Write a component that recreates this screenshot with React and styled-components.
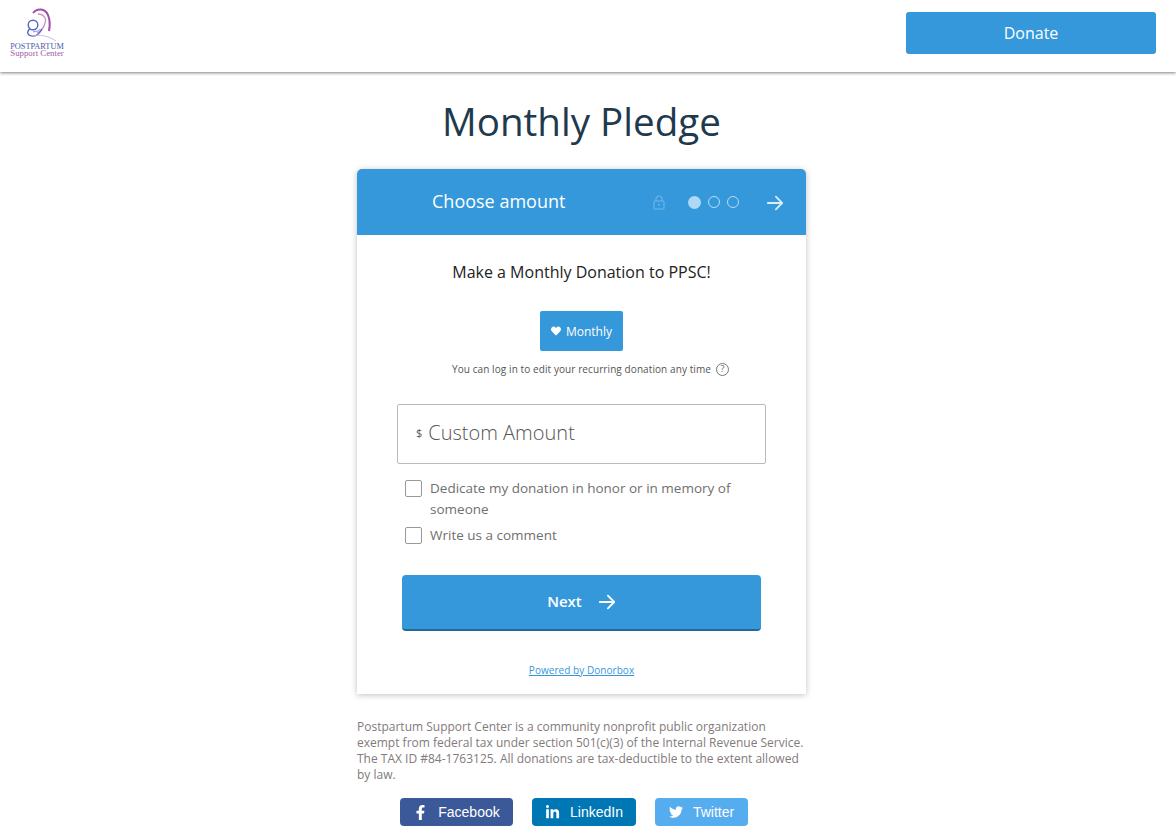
import React from 'react'
import styled, { createGlobalStyle } from 'styled-components'
import { FaFacebookF, FaLinkedinIn, FaTwitter, FaHeart } from 'react-icons/fa'

const GlobalStyle = createGlobalStyle`
    html, body {
        margin: 0;
        padding: 0;
        background: #fff;
        font-family: "Open Sans", "Liberation Sans", sans-serif;
        overflow: hidden;
    }
`

function Logo() {
    return (
        <LogoBox>
            <svg width="34" height="33" viewBox="0 0 34 33" fill="none">
                <path d="M8 5 C12 0 20 0 23 7 C25 12 25 18 24 23" stroke="#a050a8" strokeWidth="2" />
                <path d="M13 6 C18 6 22 10 20 15 C19 19 16 23 12 25" stroke="#c890c8" strokeWidth="1.3" />
                <circle cx="8" cy="17" r="4.8" stroke="#5468c0" strokeWidth="1.4" />
                <path d="M4.5 21 C1 25 3 28 8 28 C12 28 15 25 17 21" stroke="#5468c0" strokeWidth="1.4" />
                <path d="M8 24 C11 23 13 24 15 21" stroke="#8a9ad8" strokeWidth="1" />
                <path d="M6 28 C14 26 24 28 31 33" stroke="#c9b4de" strokeWidth="0.9" />
            </svg>
            <LogoMain>POSTPARTUM</LogoMain>
            <LogoSub>Support Center</LogoSub>
        </LogoBox>
    )
}

function Arrow({ size = 20 }) {
    return (
        <svg width={size} height={size} viewBox="0 0 20 20" fill="none" stroke="currentColor" strokeWidth="2" strokeLinecap="round" strokeLinejoin="round">
            <path d="M2 10 H18 M11 3 L18 10 L11 17" />
        </svg>
    )
}

function App() {
    return (
        <Page>
            <GlobalStyle />
            <TopBar>
                <Logo />
                <DonateButton>Donate</DonateButton>
            </TopBar>
            <Main>
                <Title>Monthly Pledge</Title>
                <Card>
                    <CardHeader>
                        <StepTitle>Choose amount</StepTitle>
                        <LockIcon width="12" height="15" viewBox="0 0 12 15" fill="none" stroke="currentColor" strokeWidth="1.2">
                            <rect x="1" y="6" width="10" height="8" rx="1" />
                            <path d="M3 6 V4 a3 3 0 0 1 6 0 V6" />
                            <rect x="5" y="9" width="2" height="1.6" fill="currentColor" stroke="none" />
                        </LockIcon>
                        <Dots>
                            <Dot $active />
                            <Dot />
                            <Dot />
                        </Dots>
                        <HeaderArrow><Arrow size={18} /></HeaderArrow>
                    </CardHeader>
                    <CardBody>
                        <Lead>Make a Monthly Donation to PPSC!</Lead>
                        <MonthlyButton><FaHeart size={10} /> Monthly</MonthlyButton>
                        <Hint>
                            You can log in to edit your recurring donation any time
                            <HelpIcon>?</HelpIcon>
                        </Hint>
                        <AmountField>
                            <Currency>$</Currency>
                            <AmountText>Custom Amount</AmountText>
                        </AmountField>
                        <CheckRow>
                            <CheckBox />
                            <CheckLabel>Dedicate my donation in honor or in memory of someone</CheckLabel>
                        </CheckRow>
                        <CheckRow $tight>
                            <CheckBox />
                            <CheckLabel>Write us a comment</CheckLabel>
                        </CheckRow>
                        <NextButton><NextLabel>Next</NextLabel> <Arrow size={18} /></NextButton>
                        <Powered href="#">Powered by Donorbox</Powered>
                    </CardBody>
                </Card>
                <Legal>
                    Postpartum Support Center is a community nonprofit public organization exempt from federal tax under section 501(c)(3) of the Internal Revenue Service. The TAX ID #84-1763125. All donations are tax-deductible to the extent allowed by law.
                </Legal>
                <Shares>
                    <ShareButton $bg="#3b5998" $w="113px"><FaFacebookF size={15} /> Facebook</ShareButton>
                    <ShareButton $bg="#0077b5" $w="104px"><FaLinkedinIn size={15} /> LinkedIn</ShareButton>
                    <ShareButton $bg="#55acee" $w="93px"><FaTwitter size={14} /> Twitter</ShareButton>
                </Shares>
            </Main>
        </Page>
    )
}

const Page = styled.div`
    height: 837px;
    overflow: hidden;
`

const TopBar = styled.header`
    height: 72px;
    display: flex;
    align-items: flex-start;
    justify-content: space-between;
    padding: 0 20px 0 10px;
    background: #fff;
    box-shadow: 0 1px 3px rgba(0, 0, 0, 0.5);
`

const LogoBox = styled.div`
    width: 54px;
    padding-top: 8px;
    display: flex;
    flex-direction: column;
    align-items: center;
    line-height: 1;
    font-family: "Liberation Serif", serif;

    svg {
        margin-left: 9px;
    }
`

const LogoMain = styled.div`
    font-size: 8.3px;
    line-height: 7px;
    color: #4a5aa8;
    margin-top: 2px;
    white-space: nowrap;
`

const LogoSub = styled.div`
    font-size: 8.8px;
    line-height: 7px;
    color: #a45aa8;
    white-space: nowrap;
`

const DonateButton = styled.button`
    width: 250px;
    height: 42px;
    margin-top: 12px;
    border: none;
    border-radius: 3px;
    background: #3498db;
    color: #fff;
    font-family: inherit;
    font-size: 16px;
`

const Main = styled.main`
    width: 1163px;
    display: flex;
    flex-direction: column;
    align-items: center;
`

const Title = styled.h1`
    margin: 22px 0 21px;
    font-size: 38.6px;
    line-height: 54px;
    font-weight: 400;
    color: #1f3a4d;
`

const Card = styled.section`
    width: 449px;
    height: 525px;
    border-radius: 5px 5px 0 0;
    background: #fff;
    box-shadow: 0 1px 6px rgba(0, 0, 0, 0.25);
`

const CardHeader = styled.div`
    height: 66px;
    display: flex;
    align-items: center;
    padding: 0 22px 0 75px;
    background: #3498db;
    border-radius: 5px 5px 0 0;
    color: #fff;
`

const StepTitle = styled.div`
    flex: 1;
    font-size: 18px;
    margin-top: -2px;
`

const LockIcon = styled.svg`
    color: #6db5e8;
    margin-right: 23px;
`

const Dots = styled.div`
    display: flex;
    align-items: center;
    gap: 7px;
    margin-right: 27px;
`

const Dot = styled.span`
    width: ${p => (p.$active ? '13px' : '12px')};
    height: ${p => (p.$active ? '13px' : '12px')};
    box-sizing: border-box;
    border-radius: 50%;
    border: ${p => (p.$active ? 'none' : '1px solid #b8dcf5')};
    background: ${p => (p.$active ? '#aed8f5' : 'transparent')};
`

const HeaderArrow = styled.div`
    display: flex;
    color: #d8ecfa;
    margin-top: 1px;
`

const CardBody = styled.div`
    display: flex;
    flex-direction: column;
    align-items: center;
    padding-top: 26px;
`

const Lead = styled.div`
    font-size: 16px;
    line-height: 22px;
    color: #222;
`

const MonthlyButton = styled.div`
    width: 83px;
    height: 40px;
    margin-top: 28px;
    display: flex;
    align-items: center;
    justify-content: center;
    gap: 5px;
    border-radius: 2px;
    background: #3498db;
    color: #fff;
    font-size: 12px;
`

const Hint = styled.div`
    margin-top: 9px;
    padding-left: 18px;
    display: flex;
    align-items: center;
    gap: 5px;
    font-size: 10px;
    letter-spacing: 0.09px;
    line-height: 18px;
    color: #555;
`

const HelpIcon = styled.span`
    width: 13px;
    height: 13px;
    box-sizing: border-box;
    display: flex;
    align-items: center;
    justify-content: center;
    border: 1px solid #777;
    border-radius: 50%;
    font-size: 9px;
    color: #666;
`

const AmountField = styled.div`
    width: 369px;
    height: 60px;
    box-sizing: border-box;
    margin-top: 26px;
    padding: 0 0 3px 18px;
    display: flex;
    align-items: center;
    border: 1px solid #bbb;
    border-radius: 2px;
`

const Currency = styled.span`
    font-size: 11px;
    color: #555;
    margin-right: 6px;
`

const AmountText = styled.span`
    font-size: 20px;
    font-weight: 300;
    color: #555;
`

const CheckRow = styled.label`
    width: 353px;
    margin-top: ${p => (p.$tight ? '5px' : '14px')};
    display: flex;
    align-items: flex-start;
    gap: 8px;
`

const CheckBox = styled.span`
    flex: none;
    width: 17px;
    height: 17px;
    margin-top: 2px;
    box-sizing: border-box;
    border: 1px solid #999;
    border-radius: 2px;
`

const CheckLabel = styled.span`
    font-size: 13.5px;
    line-height: 21px;
    color: #6f6f6f;
`

const NextButton = styled.button`
    width: 359px;
    height: 56px;
    margin-top: 29px;
    display: flex;
    align-items: center;
    justify-content: center;
    gap: 16px;
    border: none;
    border-bottom: 2px solid #22689c;
    border-radius: 4px;
    background: #3498db;
    color: #fff;
    font-family: inherit;
    font-size: 15px;
    font-weight: 600;
`

const NextLabel = styled.span`
    margin-top: -2px;
`

const Powered = styled.a`
    margin-top: 32px;
    font-size: 10px;
    letter-spacing: 0.05px;
    line-height: 14px;
    color: #3498db;
`

const Legal = styled.p`
    width: 449px;
    margin: 25px 0 0;
    font-size: 12px;
    line-height: 16px;
    color: #837a7a;
`

const Shares = styled.div`
    margin: 15px 15px 0 0;
    display: flex;
    gap: 19px;
`

const ShareButton = styled.a`
    width: ${p => p.$w};
    height: 28px;
    display: flex;
    align-items: center;
    justify-content: center;
    gap: 10px;
    border-radius: 4px;
    background: ${p => p.$bg};
    color: #fff;
    font-family: "Liberation Sans", Arial, sans-serif;
    font-size: 14px;
`

export default App
